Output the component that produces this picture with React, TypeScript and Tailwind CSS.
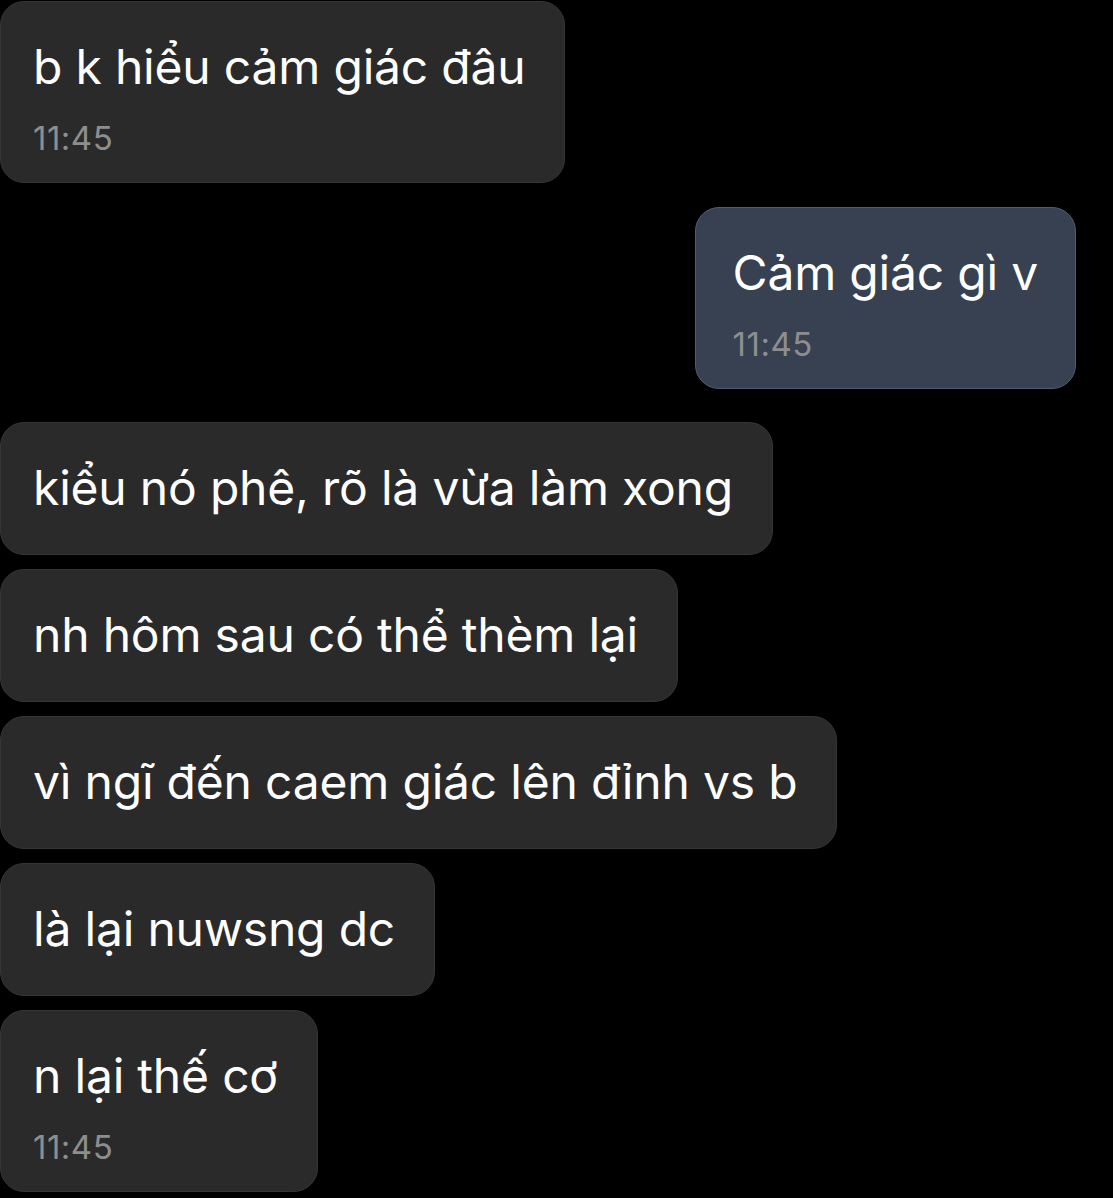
type Message = {
  text: string;
  time?: string;
  mine?: boolean;
  gap: string;
};

const messages: Message[] = [
  { text: 'b k hiểu cảm giác đâu', time: '11:45', gap: 'mt-px' },
  { text: 'Cảm giác gì v', time: '11:45', mine: true, gap: 'mt-[24px]' },
  { text: 'kiểu nó phê, rõ là vừa làm xong', gap: 'mt-[33px]' },
  { text: 'nh hôm sau có thể thèm lại', gap: 'mt-[14px]' },
  { text: 'vì ngĩ đến caem giác lên đỉnh vs b', gap: 'mt-[14px]' },
  { text: 'là lại nuwsng dc', gap: 'mt-[14px]' },
  { text: 'n lại thế cơ', time: '11:45', gap: 'mt-[14px]' },
];

function Bubble({ msg }: { msg: Message }) {
  return (
    <div className={`flex ${msg.mine ? 'justify-end pr-[37px]' : 'justify-start'} ${msg.gap}`}>
      <div
        className={`rounded-[24px] border pt-[37px] ${
          msg.time ? 'pb-[24px]' : 'pb-[38px]'
        } ${
          msg.mine
            ? 'bg-[#374151] border-[#4f5d72] pl-[37px] pr-[37px]'
            : 'bg-[#2a2a2a] border-[#363636] pl-[32px] pr-[39px]'
        }`}
      >
        <div className="text-[48px] leading-[56px] tracking-[-0.2px] text-white whitespace-nowrap">
          {msg.text}
        </div>
        {msg.time && (
          <div className="mt-[23px] text-[33px] leading-[40px] tracking-[0.5px] text-[#8e8e8e]">
            {msg.time}
          </div>
        )}
      </div>
    </div>
  );
}

export default function App() {
  return (
    <div
      className="min-h-screen w-[1113px] h-[1198px] overflow-hidden bg-black"
      style={{ fontFamily: 'Inter, "Noto Sans", sans-serif' }}
    >
      {messages.map((m, i) => (
        <Bubble key={i} msg={m} />
      ))}
    </div>
  );
}
